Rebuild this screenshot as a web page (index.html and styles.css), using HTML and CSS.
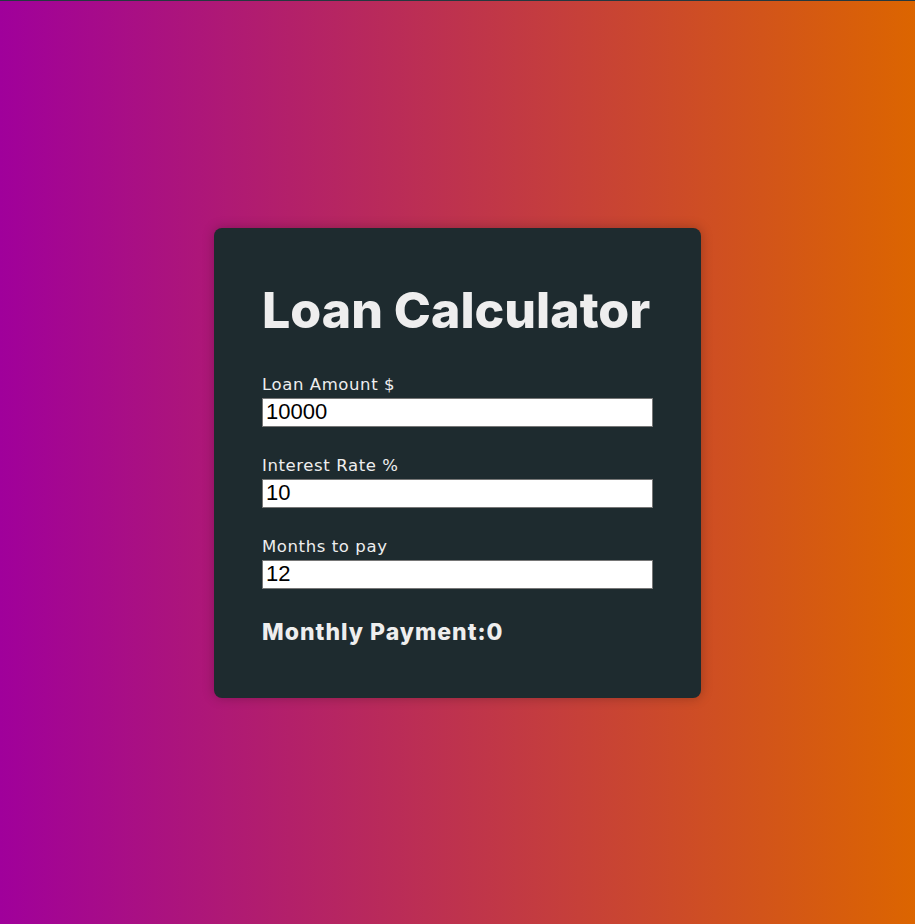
FILE: index.html
```html
<!DOCTYPE html>
<html lang="en">
<head>
<meta charset="utf-8">
<title>Loan Calculator</title>
<link rel="stylesheet" href="styles.css">
</head>
<body>
  <main class="card">
    <h1 class="title">Loan Calculator</h1>
    <div class="field">
      <label class="label" for="amount">Loan Amount $</label>
      <input class="input" id="amount" type="number" value="10000">
    </div>
    <div class="field">
      <label class="label" for="rate">Interest Rate %</label>
      <input class="input" id="rate" type="number" value="10">
    </div>
    <div class="field">
      <label class="label" for="months">Months to pay</label>
      <input class="input" id="months" type="number" value="12">
    </div>
    <p class="result">Monthly Payment:0</p>
  </main>
</body>
</html>
```

FILE: styles.css
```css
html {
  background: #22343b;
}

body {
  margin: 0;
  min-height: 100vh;
  box-sizing: border-box;
  border-top: 1px solid #25383f;
  background: linear-gradient(to right, #a0009b, #dc6500);
  display: flex;
  align-items: center;
  justify-content: center;
  font-family: Inter, "Noto Sans", sans-serif;
  color: #eeeeee;
}

.card {
  width: 487px;
  box-sizing: border-box;
  padding: 52px 48px 52px 48px;
  background: #1e2b2f;
  border-radius: 8px;
  box-shadow: 0 0 12px rgba(0, 0, 0, 0.25);
}

.title {
  margin: 0 0 35px 0;
  font-size: 50px;
  line-height: 60px;
  font-weight: 800;
  color: #eeeeee;
}

.field {
  display: flex;
  flex-direction: column;
  margin-bottom: 29px;
}

.label {
  font-family: "DejaVu Sans", Inter, sans-serif;
  font-size: 16.5px;
  line-height: 20px;
  letter-spacing: 0.6px;
  margin-bottom: 3px;
  color: #eeeeee;
}

.input {
  width: 100%;
  height: 29px;
  box-sizing: border-box;
  border: 1px solid #767676;
  padding: 0 3px;
  background: #ffffff;
  color: #000000;
  font-family: "Liberation Sans", Arial, sans-serif;
  font-size: 22px;
  -moz-appearance: textfield;
}

.input::-webkit-outer-spin-button,
.input::-webkit-inner-spin-button {
  -webkit-appearance: none;
  margin: 0;
}

.result {
  margin: 2px 0 0 0;
  font-size: 23px;
  line-height: 28px;
  font-weight: 800;
  letter-spacing: 1px;
}
```
